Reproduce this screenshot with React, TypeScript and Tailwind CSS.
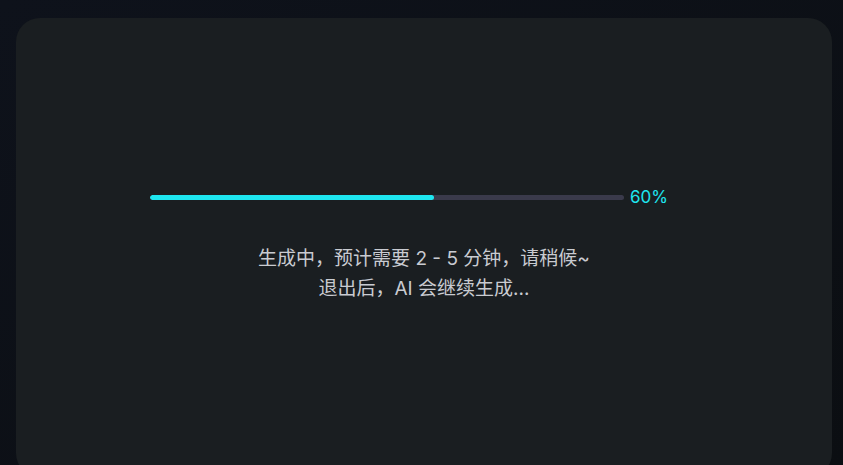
export default function App() {
  const progress = 60;
  return (
    <div className="h-screen w-full overflow-hidden bg-gradient-to-br from-[#0e121b] to-[#0b0e12] pl-4 pt-[18px] font-['Inter','Noto_Sans_CJK_SC',sans-serif]">
      <div className="h-[459px] w-[816px] rounded-3xl bg-[#1a1e21]">
        <div className="flex flex-col pt-[171px]">
          {/* progress */}
          <div className="flex items-center pl-[134px]">
            <div className="h-[5px] w-[474px] overflow-hidden rounded-full bg-[#3a3a4b]">
              <div className="h-full rounded-full bg-[#1ee6ef]" style={{ width: `${progress}%` }} />
            </div>
            <span className="ml-[6px] text-[17px] leading-none text-[#1ee6ef]">{progress}%</span>
          </div>

          <div className="mt-[38px] text-center text-[19px] leading-[30px] text-[#c9cbd1]">
            <p>生成中，预计需要 2 - 5 分钟，请稍候~</p>
            <p>退出后，AI 会继续生成...</p>
          </div>
        </div>
      </div>
    </div>
  );
}
